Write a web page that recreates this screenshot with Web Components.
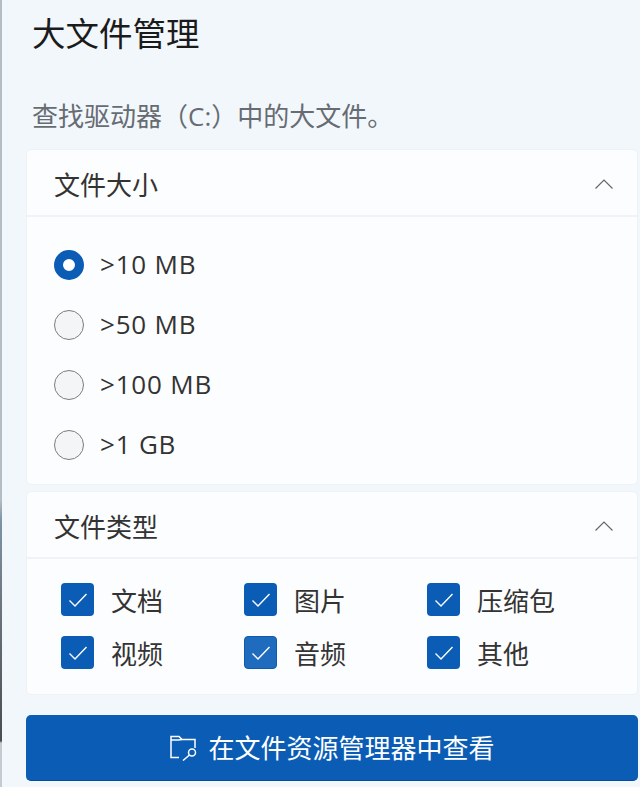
<!DOCTYPE html>
<html lang="zh-CN">
<head>
<meta charset="utf-8">
<title>大文件管理</title>
<style>
    html, body {
        margin: 0;
        padding: 0;
        height: 100%;
        overflow: hidden;
    }
    body {
        background-color: #f2f7fc;
        font-family: "Open Sans", "Noto Sans CJK SC", sans-serif;
    }
</style>
</head>
<body>
<file-panel heading="大文件管理" hint="查找驱动器（C:）中的大文件。">
    <collapse-card heading="文件大小" class="sizes">
        <radio-row checked>&gt;10 MB</radio-row>
        <radio-row>&gt;50 MB</radio-row>
        <radio-row>&gt;100 MB</radio-row>
        <radio-row>&gt;1 GB</radio-row>
    </collapse-card>
    <collapse-card heading="文件类型" class="types" columns>
        <check-item>文档</check-item>
        <check-item>图片</check-item>
        <check-item>压缩包</check-item>
        <check-item>视频</check-item>
        <check-item hover>音频</check-item>
        <check-item>其他</check-item>
    </collapse-card>
    <primary-button slot="footer">在文件资源管理器中查看</primary-button>
</file-panel>

<script>
const panelTemplate = document.createElement("template");
panelTemplate.innerHTML = `
<style>
    :host {
        display: flex;
        flex-direction: column;
        box-sizing: border-box;
        width: 640px;
        height: 787px;
        padding: 0 2px 0 24px;
        border-left: 2px solid #a9b3bd;
        border-image: linear-gradient(#b4bcc4 0, #b4bcc4 500px, #7f93a6 520px, #6d7780 600px, #4a4d52 740px, #c3cad1 742px, #c3cad1 787px) 1;
        color: #1c1c1c;
        font-family: "Open Sans", "Noto Sans CJK SC", sans-serif;
    }
    h1 {
        margin: 13px 0 0 6px;
        font-size: 33.5px;
        line-height: 40px;
        font-weight: 400;
        color: #1b1b1b;
    }
    p {
        margin: 43px 0 0 6px;
        font-size: 26px;
        line-height: 40px;
        color: #666c72;
    }
    .cards {
        display: flex;
        flex-direction: column;
        gap: 6px;
        margin-top: 13px;
    }
    .footer {
        margin-top: 20px;
    }
</style>
<h1></h1>
<p></p>
<div class="cards"><slot></slot></div>
<div class="footer"><slot name="footer"></slot></div>
`;

class FilePanel extends HTMLElement {
    constructor() {
        super();
        this.attachShadow({mode: "open"});
    }

    connectedCallback() {
        this.shadowRoot.appendChild(panelTemplate.content.cloneNode(true));
        this.shadowRoot.querySelector("h1").textContent = this.getAttribute("heading");
        this.shadowRoot.querySelector("p").textContent = this.getAttribute("hint");
    }
}

const cardTemplate = document.createElement("template");
cardTemplate.innerHTML = `
<style>
    :host {
        display: block;
        background-color: #fcfdfe;
        border: 1px solid #eef1f5;
        border-radius: 5px;
    }
    header {
        display: flex;
        align-items: center;
        justify-content: space-between;
        box-sizing: content-box;
        height: 63px;
        padding: 2px 23px 0 27px;
        border-bottom: 2px solid #eff2f6;
        font-size: 26px;
        color: #333333;
    }
    svg {
        width: 20px;
        height: 12px;
        fill: none;
        stroke: #666666;
        stroke-width: 1.2;
    }
    .body {
        display: flex;
        flex-direction: column;
        padding: 18px 27px 9px;
    }
    :host([columns]) .body {
        display: grid;
        grid-template-columns: repeat(3, 183px);
        row-gap: 20px;
        padding: 24px 34px 25px;
    }
</style>
<header>
    <span class="title"></span>
    <svg viewBox="0 0 20 12"><path d="M1.5 10.5 L10 2 L18.5 10.5"/></svg>
</header>
<div class="body"><slot></slot></div>
`;

class CollapseCard extends HTMLElement {
    constructor() {
        super();
        this.attachShadow({mode: "open"});
    }

    connectedCallback() {
        this.shadowRoot.appendChild(cardTemplate.content.cloneNode(true));
        this.shadowRoot.querySelector(".title").textContent = this.getAttribute("heading");
    }
}

const radioTemplate = document.createElement("template");
radioTemplate.innerHTML = `
<style>
    :host {
        display: flex;
        align-items: center;
        gap: 16px;
        height: 60px;
        font-size: 26px;
        letter-spacing: 0.8px;
        color: #333333;
    }
    .dot {
        box-sizing: border-box;
        width: 30px;
        height: 30px;
        border-radius: 50%;
        border: 1.5px solid #7d7d7d;
        background-color: #f4f5f7;
    }
    :host([checked]) .dot {
        border: 9px solid #0a5cb5;
        background-color: #ffffff;
    }
    .label {
        margin-bottom: 2px;
    }
</style>
<span class="dot"></span>
<span class="label"><slot></slot></span>
`;

class RadioRow extends HTMLElement {
    constructor() {
        super();
        this.attachShadow({mode: "open"});
        this.shadowRoot.appendChild(radioTemplate.content.cloneNode(true));
    }
}

const checkTemplate = document.createElement("template");
checkTemplate.innerHTML = `
<style>
    :host {
        display: flex;
        align-items: center;
        gap: 17px;
        height: 33px;
        font-size: 26px;
        color: #333333;
    }
    .box {
        display: flex;
        align-items: center;
        justify-content: center;
        width: 33px;
        height: 33px;
        border-radius: 4px;
        background-color: #0a5cb5;
    }
    :host([hover]) .box {
        box-sizing: border-box;
        background-color: #1f6bbd;
        border: 1px solid #0f5aab;
    }
    svg {
        width: 20px;
        height: 16px;
        fill: none;
        stroke: #ffffff;
        stroke-width: 1.4;
    }
</style>
<span class="box"><svg viewBox="0 0 20 16"><path d="M1.5 8.5 L7 14 L18.5 2"/></svg></span>
<span><slot></slot></span>
`;

class CheckItem extends HTMLElement {
    constructor() {
        super();
        this.attachShadow({mode: "open"});
        this.shadowRoot.appendChild(checkTemplate.content.cloneNode(true));
    }
}

const buttonTemplate = document.createElement("template");
buttonTemplate.innerHTML = `
<style>
    :host {
        display: flex;
        align-items: center;
        justify-content: center;
        gap: 11px;
        height: 66px;
        padding-bottom: 2px;
        border-radius: 5px;
        background-color: #0a5cb5;
        border-bottom: 1px solid #084c97;
        box-sizing: border-box;
        color: #ffffff;
        font-size: 26px;
    }
    svg {
        width: 28px;
        height: 28px;
        fill: none;
        stroke: #ffffff;
        stroke-width: 1.5;
    }
</style>
<svg viewBox="0 0 28 28">
    <path d="M10 24.5 H2 V3.5 H10 L13 6.5 H26 V15"/>
    <path d="M2 7 H9.5 L13 6.5"/>
    <circle cx="23" cy="19.5" r="3.5"/>
    <path d="M20.5 22 L14 27.5"/>
</svg>
<span><slot></slot></span>
`;

class PrimaryButton extends HTMLElement {
    constructor() {
        super();
        this.attachShadow({mode: "open"});
        this.shadowRoot.appendChild(buttonTemplate.content.cloneNode(true));
    }
}

customElements.define("file-panel", FilePanel);
customElements.define("collapse-card", CollapseCard);
customElements.define("radio-row", RadioRow);
customElements.define("check-item", CheckItem);
customElements.define("primary-button", PrimaryButton);
</script>
</body>
</html>
